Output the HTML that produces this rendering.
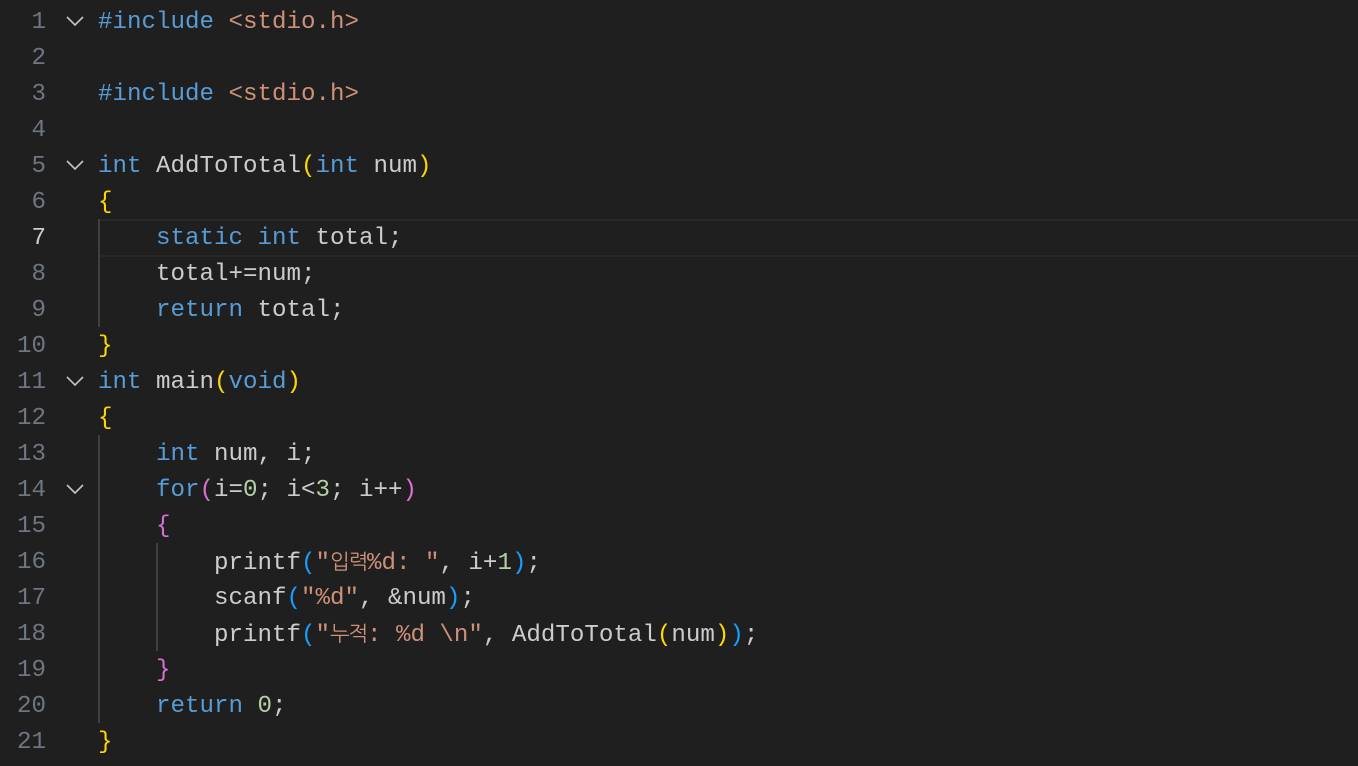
<!DOCTYPE html><html><head><style>
body{margin:0;background:#1f1f1f;width:1358px;height:766px;overflow:hidden;font-family:"Liberation Mono","NanumGothic",monospace;font-size:24.17px;color:#cccccc}
.l{position:absolute;left:0;height:36px;line-height:36px;width:1358px;white-space:pre}
.n{position:absolute;right:1312px;color:#6e7681;text-align:right}
.c{position:absolute;left:98px}
.k{color:#569cd6}.s{color:#ce9178}.d{color:#b5cea8}.y{color:#ffd700}.p{color:#da70d6}.b{color:#179fff}
.h{display:inline-block;width:18.5px;text-align:center;font-family:"NanumGothic","Noto Sans CJK KR",sans-serif;font-size:21px}
.cur{position:absolute;left:98px;top:219px;width:1260px;height:34px;border-top:2px solid #282828;border-bottom:2px solid #282828}
.g{position:absolute;width:2px;background:#404040}
</style></head><body>
<div class="cur"></div>
<div class="g" style="left:98px;top:219px;height:108px"></div>
<div class="g" style="left:98px;top:435px;height:288px"></div>
<div class="g" style="left:156px;top:543px;height:108px"></div>
<svg style="position:absolute;left:0;top:0" width="100" height="766"><g fill="none" stroke="#c5c5c5" stroke-width="1.6"><path d="M67 17l8 8 8-8"/><path d="M67 161l8 8 8-8"/><path d="M67 377l8 8 8-8"/><path d="M67 485l8 8 8-8"/></g></svg>
<div id="e"></div>
<script>
const L=[
'<span class="k">#include</span> <span class="s">&lt;stdio.h&gt;</span>','',
'<span class="k">#include</span> <span class="s">&lt;stdio.h&gt;</span>','',
'<span class="k">int</span> AddToTotal<span class="y">(</span><span class="k">int</span> num<span class="y">)</span>',
'<span class="y">{</span>',
'    <span class="k">static</span> <span class="k">int</span> total;',
'    total+=num;',
'    <span class="k">return</span> total;',
'<span class="y">}</span>',
'<span class="k">int</span> main<span class="y">(</span><span class="k">void</span><span class="y">)</span>',
'<span class="y">{</span>',
'    <span class="k">int</span> num, i;',
'    <span class="k">for</span><span class="p">(</span>i=<span class="d">0</span>; i&lt;<span class="d">3</span>; i++<span class="p">)</span>',
'    <span class="p">{</span>',
'        printf<span class="b">(</span><span class="s">"<span class="h">입</span><span class="h">력</span>%d: "</span>, i+<span class="d">1</span><span class="b">)</span>;',
'        scanf<span class="b">(</span><span class="s">"%d"</span>, &amp;num<span class="b">)</span>;',
'        printf<span class="b">(</span><span class="s">"<span class="h">누</span><span class="h">적</span>: %d \\n"</span>, AddToTotal<span class="y">(</span>num<span class="y">)</span><span class="b">)</span>;',
'    <span class="p">}</span>',
'    <span class="k">return</span> <span class="d">0</span>;',
'<span class="y">}</span>'];
let h='';L.forEach((t,i)=>{h+=`<div class="l" style="top:${5+i*36}px"><span class="n" style="${i==6?'color:#cccccc':''}">${i+1}</span><span class="c">${t}</span></div>`});
document.getElementById('e').innerHTML=h;
</script>
</body></html>
